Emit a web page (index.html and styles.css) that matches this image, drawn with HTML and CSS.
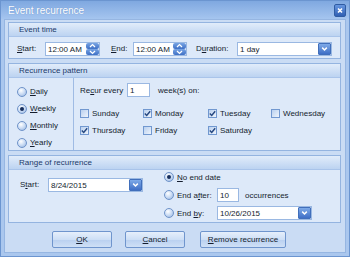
FILE: index.html
```html
<!DOCTYPE html>
<html>
<head>
<meta charset="utf-8">
<link rel="stylesheet" href="styles.css">
</head>
<body>
<div class="window">
  <div class="titlebar">
    <span class="title">Event recurrence</span>
    <span class="close"><svg width="12" height="13" viewBox="0 0 12 13"><path d="M4 4.5 L8 8.5 M8 4.5 L4 8.5" stroke="#fff" stroke-width="1.6"/></svg></span>
  </div>
  <div class="body">
    <div class="group g1">
      <div class="ghead">Event time</div>
      <div class="gbody row1">
        <span class="lbl w28"><u>S</u>tart:</span>
        <span class="field w55"><span class="val">12:00 AM</span><span class="spin"><span class="sp"><svg width="11" height="6" viewBox="0 0 11 6"><path d="M3 4 L5.5 1.6 L8 4" stroke="#fff" stroke-width="1.3" fill="none"/></svg></span><span class="sp"><svg width="11" height="6" viewBox="0 0 11 6"><path d="M3 2 L5.5 4.4 L8 2" stroke="#fff" stroke-width="1.3" fill="none"/></svg></span></span></span>
        <span class="lbl w22 ml11"><u>E</u>nd:</span>
        <span class="field w54"><span class="val">12:00 AM</span><span class="spin"><span class="sp"><svg width="11" height="6" viewBox="0 0 11 6"><path d="M3 4 L5.5 1.6 L8 4" stroke="#fff" stroke-width="1.3" fill="none"/></svg></span><span class="sp"><svg width="11" height="6" viewBox="0 0 11 6"><path d="M3 2 L5.5 4.4 L8 2" stroke="#fff" stroke-width="1.3" fill="none"/></svg></span></span></span>
        <span class="lbl w41 ml9">D<u>u</u>ration:</span>
        <span class="field w95"><span class="val">1 day</span><span class="drop"><svg width="12" height="12" viewBox="0 0 12 12"><path d="M3.5 4.5 L6 7 L8.5 4.5" stroke="#fff" stroke-width="1.6" fill="none"/></svg></span></span>
      </div>
    </div>

    <div class="group g2">
      <div class="ghead">Recurrence pattern</div>
      <div class="gbody row2">
        <div class="pleft">
          <div class="rrow"><span class="radio"></span><span><u>D</u>aily</span></div>
          <div class="rrow"><span class="radio on"></span><span><u>W</u>eekly</span></div>
          <div class="rrow"><span class="radio"></span><span><u>M</u>onthly</span></div>
          <div class="rrow"><span class="radio"></span><span><u>Y</u>early</span></div>
        </div>
        <div class="pright">
          <div class="recur">
            <span class="lbl w47">Re<u>c</u>ur every</span>
            <span class="field w23"><span class="val">1</span></span>
            <span class="ml8">week(s) on:</span>
          </div>
          <div class="days">
            <div class="crow"><span class="cb"></span><span>Sunday</span></div>
            <div class="crow"><span class="cb on"><svg width="9" height="9" viewBox="0 0 9 9"><path d="M1.8 4.6 L3.7 6.5 L7.2 2.2" stroke="#24467f" stroke-width="1.4" fill="none"/></svg></span><span>Monday</span></div>
            <div class="crow"><span class="cb on"><svg width="9" height="9" viewBox="0 0 9 9"><path d="M1.8 4.6 L3.7 6.5 L7.2 2.2" stroke="#24467f" stroke-width="1.4" fill="none"/></svg></span><span>Tuesday</span></div>
            <div class="crow"><span class="cb"></span><span>Wednesday</span></div>
            <div class="crow"><span class="cb on"><svg width="9" height="9" viewBox="0 0 9 9"><path d="M1.8 4.6 L3.7 6.5 L7.2 2.2" stroke="#24467f" stroke-width="1.4" fill="none"/></svg></span><span>Thursday</span></div>
            <div class="crow"><span class="cb"></span><span>Friday</span></div>
            <div class="crow"><span class="cb on"><svg width="9" height="9" viewBox="0 0 9 9"><path d="M1.8 4.6 L3.7 6.5 L7.2 2.2" stroke="#24467f" stroke-width="1.4" fill="none"/></svg></span><span>Saturday</span></div>
          </div>
        </div>
      </div>
    </div>

    <div class="group g3">
      <div class="ghead">Range of recurrence</div>
      <div class="gbody row3">
        <div class="rleft">
          <span class="lbl w28">S<u>t</u>art:</span>
          <span class="field w95"><span class="val">8/24/2015</span><span class="drop"><svg width="12" height="12" viewBox="0 0 12 12"><path d="M3.5 4.5 L6 7 L8.5 4.5" stroke="#fff" stroke-width="1.6" fill="none"/></svg></span></span>
        </div>
        <div class="rright">
          <div class="erow"><span class="radio on"></span><span><u>N</u>o end date</span></div>
          <div class="erow"><span class="radio"></span><span class="lbl w40">End a<u>f</u>ter:</span><span class="field w22"><span class="val">10</span></span><span class="ml6">occurrences</span></div>
          <div class="erow"><span class="radio"></span><span class="lbl w40">End <u>b</u>y:</span><span class="field w95"><span class="val">10/26/2015</span><span class="drop"><svg width="12" height="12" viewBox="0 0 12 12"><path d="M3.5 4.5 L6 7 L8.5 4.5" stroke="#fff" stroke-width="1.6" fill="none"/></svg></span></span></div>
        </div>
      </div>
    </div>

    <div class="buttons">
      <span class="btn w60"><u>O</u>K</span>
      <span class="btn w60 ml13"><u>C</u>ancel</span>
      <span class="btn w86 ml15"><u>R</u>emove recurrence</span>
    </div>
  </div>
</div>
</body>
</html>
```

FILE: styles.css
```css
* { box-sizing: border-box; }
html, body { margin: 0; padding: 0; }
body {
  width: 350px;
  height: 257px;
  overflow: hidden;
  font-family: "Liberation Sans", Arial, sans-serif;
  font-size: 8px;
  color: #141d2e;
  background: #b9d2f0;
}
u { text-decoration: underline; text-underline-offset: 1px; }

.window {
  width: 350px;
  height: 257px;
  display: flex;
  flex-direction: column;
  border: 1px solid #6b95d0;
  background: #aac7ee;
}
.titlebar {
  height: 18px;
  flex: none;
  display: flex;
  align-items: center;
  padding: 0 3px 0 7px;
  background: linear-gradient(#7fa8e0, #a5c5ef);
}
.title {
  flex: 1;
  font-size: 10px;
  color: #ffffff;
  text-shadow: 0 0 1px #5f88c2;
}
.close {
  width: 12px;
  height: 13px;
  display: flex;
  border: 1px solid #2f5ca3;
  border-radius: 2px;
  background: linear-gradient(#6796df, #2f5fb3);
}
.close svg { margin: -1px; }

.body {
  flex: 1;
  margin: 0 3px 3px;
  border: 1px solid #96b6e2;
  background: #cadcf4;
  padding: 2px 4px 0 3px;
  display: flex;
  flex-direction: column;
}

.group {
  border: 1px solid #94b4e0;
  background: #dde9f9;
}
.g2, .g3 { margin-top: 4px; }
.ghead {
  height: 14px;
  border-bottom: 1px solid #a9c4ea;
  background: linear-gradient(#e1ecfa, #bcd3f1);
  padding-left: 10px;
  line-height: 13px;
  color: #1c3a6a;
}

.lbl { display: inline-block; flex: none; }
.w22 { width: 22px; }
.w23 { width: 23px; }
.w28 { width: 28px; }
.w40 { width: 40px; }
.w41 { width: 41px; }
.w47 { width: 47px; }
.w54 { width: 54px; }
.w55 { width: 55px; }
.w60 { width: 60px; }
.w86 { width: 86px; }
.w95 { width: 95px; }
.ml6 { margin-left: 6px; }
.ml8 { margin-left: 8px; }
.ml9 { margin-left: 9px; }
.ml11 { margin-left: 11px; }
.ml13 { margin-left: 13px; }
.ml15 { margin-left: 15px; }

.field {
  height: 14px;
  flex: none;
  display: flex;
  align-items: center;
  border: 1px solid #9ab8e2;
  background: #ffffff;
  padding-left: 2px;
  color: #141d2e;
}
.val { flex: 1; }
.spin {
  width: 13px;
  height: 12px;
  display: flex;
  flex-direction: column;
}
.sp {
  height: 6px;
  display: flex;
  justify-content: center;
  border-radius: 2px;
  background: linear-gradient(#78a4e3, #3f70c6);
}
.sp svg { display: block; }
.drop {
  width: 13px;
  height: 12px;
  display: flex;
  align-items: center;
  justify-content: center;
  border: 1px solid #416fbb;
  border-radius: 1px;
  background: linear-gradient(#7eaae8, #3f6fc6);
}

.gbody { display: flex; }
.row1 {
  height: 21px;
  padding: 5px 0 0 8px;
  align-items: flex-start;
}
.row1 .lbl { line-height: 14px; }

.row2 { height: 72px; }
.pleft {
  width: 65px;
  border-right: 1px solid #9fbbe4;
  padding: 5px 0 0 8px;
}
.rrow, .crow, .erow {
  display: flex;
  align-items: center;
}
.rrow { height: 17px; }
.radio {
  width: 10px;
  height: 10px;
  flex: none;
  border-radius: 50%;
  border: 1px solid #6f93c9;
  background: radial-gradient(circle at 38% 32%, #ffffff 0, #cfdff5 45%, #93b3e0 100%);
  margin-right: 3px;
  display: flex;
  align-items: center;
  justify-content: center;
}
.radio.on::after {
  content: "";
  width: 4px;
  height: 4px;
  border-radius: 50%;
  background: #162e5c;
}
.pright { padding: 5px 0 0 6px; }
.recur {
  height: 14px;
  display: flex;
  align-items: center;
}
.days {
  margin-top: 8px;
  display: grid;
  grid-template-columns: 63px 65px 63px auto;
  grid-auto-rows: 17px;
}
.cb {
  width: 9px;
  height: 9px;
  flex: none;
  border: 1px solid #7198d0;
  background: linear-gradient(135deg, #b9d0ef, #eef4fc);
  margin-right: 3px;
  display: flex;
  align-items: center;
  justify-content: center;
}
.cb svg { margin: -1px; }

.row3 { height: 52px; }
.rleft {
  width: 155px;
  padding: 8px 0 0 11px;
  display: flex;
  align-items: flex-start;
}
.rleft .lbl { line-height: 14px; }
.rright {
  display: flex;
  flex-direction: column;
  gap: 4px;
}
.erow { height: 14px; }

.buttons {
  margin-top: 8px;
  padding-left: 44px;
  display: flex;
}
.btn {
  height: 17px;
  display: flex;
  align-items: center;
  justify-content: center;
  border: 1px solid #6f95cd;
  border-radius: 2px;
  background: linear-gradient(#e6effb, #cddff6 50%, #b9d0f0 51%, #cfe0f6);
  color: #141d2e;
}
```
